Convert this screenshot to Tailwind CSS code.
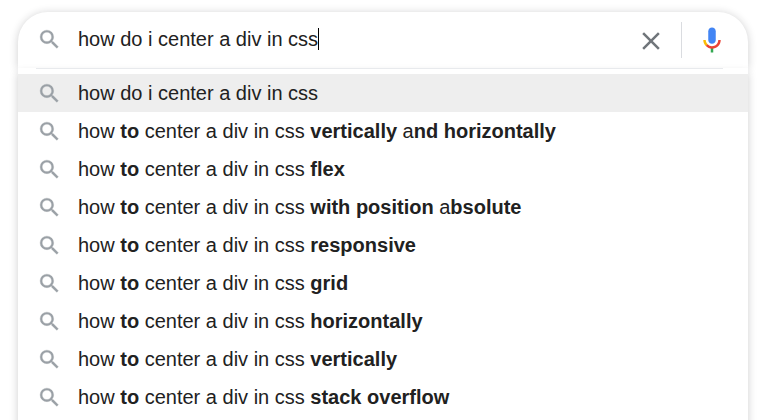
<!DOCTYPE html>
<html lang="en">
<head>
<meta charset="utf-8">
<title>Search</title>
<script src="https://cdn.jsdelivr.net/npm/@tailwindcss/browser@4"></script>
</head>
<body class="bg-white h-[420px] overflow-hidden text-[20px] leading-[25px] text-[#212121] font-['Liberation_Sans',Arial,sans-serif]">
<svg class="hidden">
  <symbol id="search" viewBox="0 0 24 24"><path fill="#9aa0a6" stroke="#9aa0a6" stroke-width=".3" d="M15.5 14h-.79l-.28-.27A6.471 6.471 0 0 0 16 9.5 6.5 6.5 0 1 0 9.5 16c1.61 0 3.09-.59 4.23-1.57l.27.28v.79l5 4.99L20.49 19l-4.99-5zm-6 0C7.01 14 5 11.99 5 9.5S7.01 5 9.5 5 14 7.01 14 9.5 11.99 14 9.5 14z"/></symbol>
</svg>
<main class="ml-[18px] w-[730px] pt-3">
  <div class="flex h-14 items-center rounded-t-[30px] bg-white pl-[19px] pr-[21px] shadow-[0_1px_8px_rgba(32,33,36,0.22)]">
    <svg class="mb-0.5 size-[25px] shrink-0"><use href="#search"/></svg>
    <div class="mb-0.5 ml-4 flex grow items-center"><span class="whitespace-pre">how do i center a div in css</span><span class="h-[22px] w-px bg-black"></span></div>
    <svg class="mt-px size-[30px] shrink-0" viewBox="0 0 24 24" fill="#70757a"><path d="M19 6.41L17.59 5 12 10.59 6.41 5 5 6.41 10.59 12 5 17.59 6.41 19 12 13.41 17.59 19 19 17.59 13.41 12z"/></svg>
    <div class="ml-[15px] mr-[15px] h-9 w-px bg-[#dadce0]"></div>
    <svg class="size-[30px] shrink-0" viewBox="0 0 24 24"><path fill="#4285f4" d="m12 15c1.66 0 3-1.31 3-2.97v-7.02c0-1.66-1.34-3.01-3-3.01s-3 1.34-3 3.01v7.02c0 1.66 1.34 2.97 3 2.97z"/><path fill="#34a853" d="m11 18.08h2v3.92h-2z"/><path fill="#fbbc05" d="m7.05 16.87c-1.27-1.33-2.05-2.83-2.05-4.87h2c0 1.45 0.56 2.42 1.47 3.38v0.32l-1.15 1.18z"/><path fill="#ea4335" d="m12 16.93a4.97 5.25 0 0 1 -3.54 -1.55l-1.41 1.49c1.26 1.34 3.02 2.13 4.95 2.13 3.87 0 6.99-2.92 6.99-7h-1.99c0 2.92-2.24 4.93-5 4.93z"/></svg>
  </div>
  <div class="h-[370px] bg-white shadow-[0_5px_8px_rgba(32,33,36,0.22)]">
    <div class="mx-[18px] mr-[25px] h-px bg-[#e8eaed]"></div>
    <ul class="pt-[5px] [&>li]:flex [&>li]:h-[38px] [&>li]:items-center [&>li]:gap-4 [&>li]:pl-[19px] [&_svg]:size-[25px] [&_span]:whitespace-pre">
      <li class="bg-[#eeeeee]"><svg><use href="#search"/></svg><span>how do i center a div in css</span></li>
      <li><svg><use href="#search"/></svg><span>how <b>to</b> center a div in css <b>vertically</b> a<b>nd horizontally</b></span></li>
      <li><svg><use href="#search"/></svg><span>how <b>to</b> center a div in css <b>flex</b></span></li>
      <li><svg><use href="#search"/></svg><span>how <b>to</b> center a div in css <b>with position</b> a<b>bsolute</b></span></li>
      <li><svg><use href="#search"/></svg><span>how <b>to</b> center a div in css <b>responsive</b></span></li>
      <li><svg><use href="#search"/></svg><span>how <b>to</b> center a div in css <b>grid</b></span></li>
      <li><svg><use href="#search"/></svg><span>how <b>to</b> center a div in css <b>horizontally</b></span></li>
      <li><svg><use href="#search"/></svg><span>how <b>to</b> center a div in css <b>vertically</b></span></li>
      <li><svg><use href="#search"/></svg><span>how <b>to</b> center a div in css <b>stack overflow</b></span></li>
    </ul>
  </div>
</main>
</body>
</html>
